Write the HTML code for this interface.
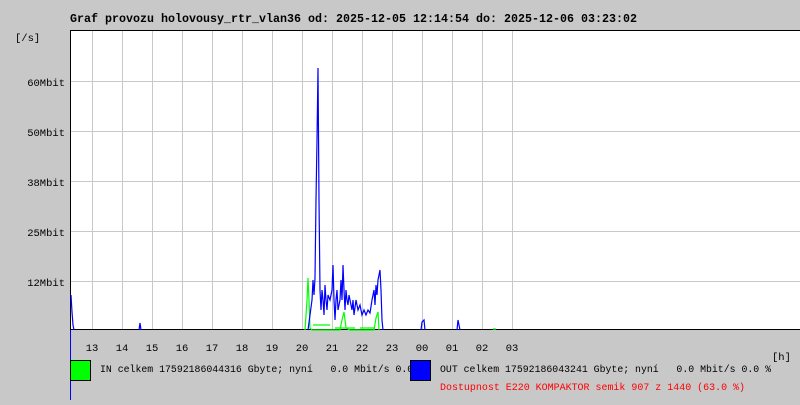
<!DOCTYPE html>
<html><head><style>
body{margin:0;width:800px;height:400px;background:#c8c8c8;overflow:hidden}
text{font-family:"Liberation Mono","DejaVu Sans Mono",monospace;font-size:10.5px;white-space:pre}
</style></head><body>
<svg width="800" height="400" xmlns="http://www.w3.org/2000/svg" xml:space="preserve">
<rect x="70" y="30" width="730" height="300" fill="#fff"/>
<g stroke="#c8c8c8" stroke-width="1">
<path d="M92.5 30V330M122.5 30V330M152.5 30V330M182.5 30V330M212.5 30V330M242.5 30V330M272.5 30V330M302.5 30V330M332.5 30V330M362.5 30V330M392.5 30V330M422.5 30V330M452.5 30V330M482.5 30V330M512.5 30V330"/>
<path d="M70 81.5H800M70 131.5H800M70 181.5H800M70 231.5H800M70 281.5H800"/>
</g>
<path d="M70.5 30V330M70 30.5H800M70 329.5H800" stroke="#000" fill="none"/>
<g fill="none" stroke="#00ff00" stroke-width="1.2">
<polyline points="305,330 307,300 308,278 309,300 310,328 312,330 340,330 342,320 344,312 346,328 350,330 374,330 376,318 378,312 379,330"/>
<path d="M313 325H330M335 328H355M360 328H375M493 329H496"/>
</g>
<g fill="none" stroke="#0000ff" stroke-width="1.2">
<polyline points="71,295 72,312 73,325 74,330"/>
<polyline points="139,330 140,323 141,330"/>
<polyline points="308,330 310,315 312,300 313,280 314,295 315,278 316,200 317,140 318,68 319,200 320,290 321,310 322,290 323,300 324,315 325,285 326,300 327,310 328,295 330,300 332,290 333,265 334,300 335,320 336,300 337,290 338,310 340,300 341,280 342,300 343,265 344,290 345,310 346,290 347,300 348,305 349,295 350,300 352,310 353,300 354,315 356,300 358,310 360,305 362,315 364,310 366,315 368,310 370,313 372,300 374,290 375,305 376,285 377,295 378,280 379,275 380,270 381,290 382,320 383,330"/>
<polyline points="421,330 422,322 424,320 425,330"/>
<polyline points="457,330 458,320 459,325 460,330"/>
</g>
<path d="M70.5 330V400" stroke="#0000ff"/>
<text x="70" y="22" font-weight="bold" style="font-size:11.8px" textLength="567" lengthAdjust="spacingAndGlyphs">Graf provozu holovousy_rtr_vlan36 od: 2025-12-05 12:14:54 do: 2025-12-06 03:23:02</text>
<text x="15" y="41">[/s]</text>
<g text-anchor="end">
<text x="65" y="86">60Mbit</text><text x="65" y="136">50Mbit</text><text x="65" y="186">38Mbit</text><text x="65" y="236">25Mbit</text><text x="65" y="286">12Mbit</text>
</g>
<g text-anchor="middle">
<text x="92" y="351">13</text><text x="122" y="351">14</text><text x="152" y="351">15</text><text x="182" y="351">16</text><text x="212" y="351">17</text><text x="242" y="351">18</text><text x="272" y="351">19</text><text x="302" y="351">20</text><text x="332" y="351">21</text><text x="362" y="351">22</text><text x="392" y="351">23</text><text x="422" y="351">00</text><text x="452" y="351">01</text><text x="482" y="351">02</text><text x="512" y="351">03</text>
</g>
<text x="772" y="360">[h]</text>
<text x="100" y="372" textLength="325" lengthAdjust="spacingAndGlyphs">IN celkem 17592186044316 Gbyte; nyní   0.0 Mbit/s 0.0 %</text>
<rect x="70.5" y="360.5" width="20" height="20" fill="#00ff00" stroke="#000"/>
<rect x="410.5" y="360.5" width="20" height="20" fill="#0000ff" stroke="#000"/>
<text x="440" y="372" textLength="331" lengthAdjust="spacingAndGlyphs">OUT celkem 17592186043241 Gbyte; nyní   0.0 Mbit/s 0.0 %</text>
<text x="440" y="390" fill="#ff0000" textLength="305" lengthAdjust="spacingAndGlyphs">Dostupnost E220 KOMPAKTOR semik 907 z 1440 (63.0 %)</text>
</svg>
</body></html>
